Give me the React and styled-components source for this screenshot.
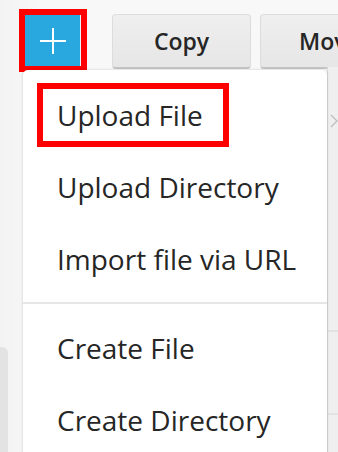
import React from "react";
import styled, { createGlobalStyle } from "styled-components";

const GlobalStyle = createGlobalStyle`
  html, body {
    margin: 0;
    padding: 0;
    background: #f5f5f5;
  }
  body {
    font-family: "Open Sans", "Noto Sans", sans-serif;
    color: #262626;
  }
`;

const menuItems = [
  { label: "Upload File", highlighted: true },
  { label: "Upload Directory" },
  { label: "Import file via URL" },
  { divider: true },
  { label: "Create File" },
  { label: "Create Directory" },
];

export default function App() {
  return (
    <>
      <GlobalStyle />
      <Page>
        <Toolbar>
          <AddOutline>
            <AddButton>
              <svg width="28" height="28" viewBox="0 0 28 28">
                <path d="M14 1v26M1 14h26" stroke="#fff" strokeWidth="2" />
              </svg>
            </AddButton>
          </AddOutline>
          <ToolButton>Copy</ToolButton>
          <ToolButton>Move</ToolButton>
        </Toolbar>

        <Content>
          <Gutter>
            <SideCard />
          </Gutter>
          <FileList>
            <Chevron>
              <svg width="8" height="14" viewBox="0 0 8 14">
                <path d="M1 1l6 6-6 6" fill="none" stroke="#bdbdbd" strokeWidth="1.3" />
              </svg>
            </Chevron>
            <ListRow $top={263} />
            <ListRow $top={346} />
          </FileList>
        </Content>

        <Menu>
          {menuItems.map((item, i) =>
            item.divider ? (
              <Divider key={i} />
            ) : (
              <MenuItem key={i}>
                {item.highlighted && <Highlight />}
                {item.label}
              </MenuItem>
            )
          )}
        </Menu>
      </Page>
    </>
  );
}

const Page = styled.div`
  position: relative;
  width: 338px;
  height: 452px;
  overflow: hidden;
  background: linear-gradient(to right, #f3f3f3, #f8f8f8 40px);
`;

const Toolbar = styled.div`
  display: flex;
  align-items: flex-start;
  padding: 9px 0 0 19px;
  height: 67px;
  box-sizing: border-box;
  white-space: nowrap;
`;

const AddOutline = styled.div`
  flex: none;
  border: 6px solid #ff0000;
  width: 56px;
  height: 51px;
`;

const AddButton = styled.div`
  width: 100%;
  height: 100%;
  background: #29a8df;
  border-right: 1px solid #e6f4fb;
  box-sizing: border-box;
  display: flex;
  align-items: center;
  justify-content: center;
`;

const ToolButton = styled.button`
  flex: none;
  width: 139px;
  height: 55px;
  margin: 5px 0 0 25px;
  border: 1px solid #dcdcdc;
  border-bottom: 2px solid #c4c4c4;
  border-radius: 4px;
  background: linear-gradient(#efefef, #e6e6e6);
  font-family: "Open Sans", sans-serif;
  font-weight: 600;
  font-size: 23px;
  color: #262626;
  padding: 0;
  & + & {
    margin-left: 9px;
  }
`;

const Content = styled.div`
  display: flex;
  height: 385px;
`;

const Gutter = styled.div`
  width: 328px;
  padding-top: 280px;
  box-sizing: border-box;
`;

const SideCard = styled.div`
  width: 8px;
  height: 200px;
  background: #e3e3e3;
  border-top-right-radius: 6px;
`;

const FileList = styled.div`
  position: relative;
  flex: 1;
  background: #efefef;
  border-left: 1px solid #d8d8d8;
`;

const Chevron = styled.div`
  padding: 44px 0 0 2px;
`;

const ListRow = styled.div`
  position: absolute;
  left: 0;
  right: 0;
  top: ${(p) => p.$top}px;
  border-top: 2px solid #e2e2e2;
`;

const Menu = styled.div`
  position: absolute;
  left: 23px;
  top: 70px;
  width: 304px;
  padding-top: 9px;
  background: #fff;
  border-radius: 5px 5px 0 0;
  box-shadow: 0 0 3px rgba(0, 0, 0, 0.18);
`;

const MenuItem = styled.div`
  position: relative;
  height: 72px;
  line-height: 72px;
  padding-left: 34px;
  font-size: 28px;
  color: #262626;
  white-space: nowrap;
`;

const Highlight = styled.div`
  position: absolute;
  left: 14px;
  top: 4px;
  width: 192px;
  height: 64px;
  border: 6px solid #ff0000;
  box-sizing: border-box;
`;

const Divider = styled.div`
  height: 2px;
  background: #e6e6e6;
  margin: 7px 0 8px;
`;
